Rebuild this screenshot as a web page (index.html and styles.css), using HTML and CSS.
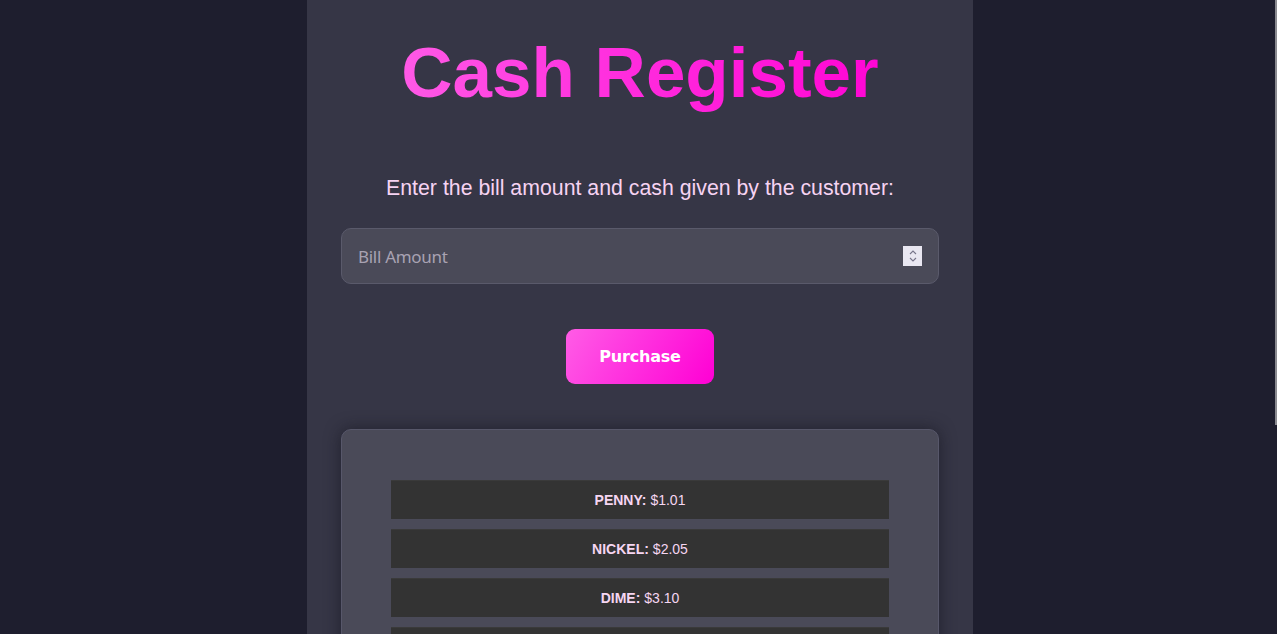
FILE: index.html
```html
<!DOCTYPE html>
<html lang="en">
<head>
<meta charset="utf-8">
<title>Cash Register</title>
<link rel="stylesheet" href="styles.css">
</head>
<body>
<main class="register">
  <h1 class="title">Cash Register</h1>
  <p class="prompt">Enter the bill amount and cash given by the customer:</p>
  <div class="field">
    <input class="amount" type="text" placeholder="Bill Amount">
    <span class="spin">
      <svg width="10" height="14" viewBox="0 0 10 14"><path d="M2 5 L5 2 L8 5 M2 9 L5 12 L8 9" fill="none" stroke="#77758a" stroke-width="1.1"/></svg>
    </span>
  </div>
  <div class="actions">
    <button class="purchase" type="button">Purchase</button>
  </div>
  <section class="result">
    <div class="row"><b>PENNY:</b> $1.01</div>
    <div class="row"><b>NICKEL:</b> $2.05</div>
    <div class="row"><b>DIME:</b> $3.10</div>
    <div class="row"><b>QUARTER:</b> $4.25</div>
    <div class="row"><b>ONE:</b> $90</div>
  </section>
</main>
<div class="scrollthumb"></div>
</body>
</html>
```
FILE: styles.css
```css
html, body {
  margin: 0;
  padding: 0;
  overflow: hidden;
  height: 100%;
}
body {
  background: #1e1e2e;
  font-family: "Liberation Sans", Arial, sans-serif;
  display: flex;
  justify-content: center;
  padding-left: 3px;
  box-sizing: border-box;
}
.register {
  width: 666px;
  box-sizing: border-box;
  background: #363646;
  padding: 31px 34px 40px;
  min-height: 900px;
}
.title {
  margin: 0;
  font-size: 71px;
  font-weight: bold;
  text-align: center;
  line-height: 83px;
  background: linear-gradient(90deg, #ff5ae6 0%, #ff2ede 45%, #ff05d4 100%);
  -webkit-background-clip: text;
  background-clip: text;
  color: transparent;
  width: max-content;
  margin: 0 auto;
  padding: 0 2px;
}
.prompt {
  margin: 63px 0 0;
  font-size: 21.3px;
  line-height: 23px;
  text-align: center;
  color: #f6d3f2;
}
.field {
  position: relative;
  margin-top: 28px;
}
.amount {
  display: block;
  width: 100%;
  box-sizing: border-box;
  height: 56px;
  background: #4a4a58;
  border: 1px solid #5a5a6b;
  border-radius: 10px;
  padding: 0 16px;
  font-family: "Noto Sans", "Open Sans", sans-serif;
  font-size: 17px;
  letter-spacing: -0.3px;
  color: #e8d8ee;
  outline: none;
}
.amount::placeholder {
  color: #a8a2b2;
}
.spin {
  position: absolute;
  right: 17px;
  top: 18px;
  width: 19px;
  height: 20px;
  background: #e9e7f1;
  display: flex;
  align-items: center;
  justify-content: center;
}
.actions {
  display: flex;
  justify-content: center;
  margin-top: 45px;
}
.purchase {
  width: 148px;
  height: 55px;
  border: none;
  border-radius: 9px;
  background: linear-gradient(120deg, #ff5ce6 0%, #ff2ede 50%, #ff00d4 100%);
  color: #ffffff;
  font-family: "DejaVu Sans", Verdana, sans-serif;
  font-weight: bold;
  font-size: 16px;
  letter-spacing: -0.2px;
  cursor: pointer;
}
.result {
  margin-top: 45px;
  background: #4a4a58;
  border: 1px solid #57576a;
  border-radius: 10px;
  padding: 50px 49px 40px;
  display: flex;
  flex-direction: column;
  gap: 10px;
  box-shadow: 0 0 16px rgba(18, 18, 28, 0.6);
}
.row {
  background: #333333;
  height: 39px;
  display: flex;
  align-items: center;
  justify-content: center;
  gap: 4px;
  font-size: 14px;
  color: #f6d6f2;
  border-top: 1px solid #3a3a3a;
  box-sizing: border-box;
}
.row b {
  font-weight: bold;
}
.scrollthumb {
  position: fixed;
  right: 0;
  top: 0;
  width: 2px;
  height: 425px;
  background: #8a8a90;
}
```
